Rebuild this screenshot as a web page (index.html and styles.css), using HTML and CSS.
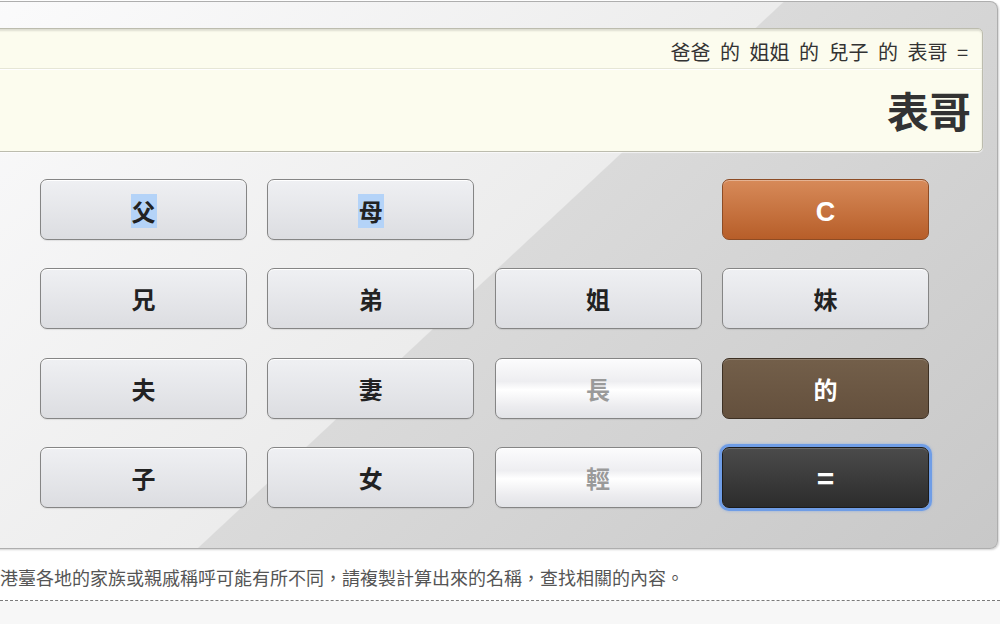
FILE: index.html
```html
<!DOCTYPE html>
<html lang="zh-Hant">
<head>
<meta charset="utf-8">
<title>親戚稱呼計算器</title>
<link rel="stylesheet" href="styles.css">
</head>
<body>
<div class="page">
  <div class="calc">
    <div class="display">
      <div class="expr">爸爸 的 姐姐 的 兒子 的 表哥 =</div>
      <div class="result">表哥</div>
    </div>
    <div class="keys">
      <button class="key"><span class="sel">父</span></button>
      <button class="key"><span class="sel">母</span></button>
      <span class="blank"></span>
      <button class="key key-clear">C</button>

      <button class="key">兄</button>
      <button class="key">弟</button>
      <button class="key">姐</button>
      <button class="key">妹</button>

      <button class="key">夫</button>
      <button class="key">妻</button>
      <button class="key key-off">長</button>
      <button class="key key-of">的</button>

      <button class="key">子</button>
      <button class="key">女</button>
      <button class="key key-off">輕</button>
      <button class="key key-eq">=</button>
    </div>
  </div>
  <p class="note">港臺各地的家族或親戚稱呼可能有所不同，請複製計算出來的名稱，查找相關的內容。</p>
  <div class="below"></div>
</div>
</body>
</html>
```
FILE: styles.css
```css
html, body {
  margin: 0;
  padding: 0;
  background: #ffffff;
}

body {
  font-family: "Noto Sans CJK TC", "Noto Sans", sans-serif;
  color: #333;
}

.page {
  padding-top: 1px;
}

.calc {
  margin-left: -30px;
  width: 1028px;
  box-sizing: border-box;
  padding: 26px 69px 40px 70px;
  border: 1px solid #aeaeae;
  border-left: none;
  border-radius: 0 8px 8px 0;
  background: linear-gradient(137deg, #fbfbfc 0%, #ececec 50.4%, #dadada 50.5%, #c8c8c8 100%);
  box-shadow: 1px 1px 2px rgba(0, 0, 0, 0.18);
}

.display {
  margin: 0 -55px 0 -56px;
  background: #fcfcee;
  border: 1px solid #bcbcae;
  border-radius: 5px;
  box-shadow: inset 0 2px 2px rgba(0, 0, 0, 0.12), 0 1px 1px rgba(255, 255, 255, 0.7);
  text-align: right;
}

.expr {
  height: 40px;
  box-sizing: border-box;
  padding: 10px 14px 0 0;
  font-size: 20px;
  line-height: 26px;
  word-spacing: 5px;
  color: #333;
  border-bottom: 1px solid #e6e6d6;
  box-shadow: 0 1px 0 #ffffff;
}

.result {
  height: 82px;
  box-sizing: border-box;
  padding: 15px 11px 0 0;
  font-size: 42px;
  line-height: 52px;
  font-weight: 700;
  color: #333;
}

.keys {
  margin-top: 27px;
  display: grid;
  grid-template-columns: repeat(4, 207px);
  grid-auto-rows: 61px;
  column-gap: 20.3px;
  row-gap: 28.3px;
}

.key {
  display: flex;
  align-items: center;
  justify-content: center;
  margin: 0;
  padding: 0;
  border: 1px solid #858585;
  border-radius: 7px;
  background: linear-gradient(#eff0f3, #dcdde1);
  box-shadow: inset 0 1px 0 #ffffff, 0 1px 1px rgba(0, 0, 0, 0.08);
  font-family: "Noto Sans CJK TC", "Noto Sans", sans-serif;
  font-size: 24px;
  font-weight: 700;
  color: #222;
  cursor: pointer;
}

.sel {
  background: #b4d3f8;
  line-height: 34px;
  padding: 0 1px;
  margin-top: 3px;
}

.key-off {
  background: linear-gradient(#fcfcfd 0%, #eeeef1 38%, #ffffff 52%, #ececef 80%, #e2e3e7 100%);
  color: #9a9a9a;
}

.key-clear {
  background: linear-gradient(#d78a59, #b75e29);
  border-color: #8d4c25;
  box-shadow: inset 0 1px 0 rgba(255, 255, 255, 0.35);
  color: #ffffff;
  font-family: "Liberation Sans", Arial, sans-serif;
  font-size: 27px;
  padding-top: 6px;
}

.key-of {
  background: linear-gradient(#735f4a, #64503d);
  border-color: #3d3023;
  box-shadow: inset 0 1px 0 rgba(255, 255, 255, 0.2);
  color: #ffffff;
}

.key-eq {
  background: linear-gradient(#4b4b4b, #2c2c2c);
  border-color: #1b1b1b;
  box-shadow: inset 0 1px 0 rgba(255, 255, 255, 0.18), 0 0 0 3px #6f9de6, 0 0 3px 3px rgba(111, 157, 230, 0.6);
  color: #ffffff;
  font-family: "Liberation Sans", Arial, sans-serif;
  font-size: 30px;
  padding-top: 3px;
}

.note {
  margin: 0;
  height: 52px;
  box-sizing: border-box;
  padding: 16px 0 0 0;
  font-size: 18px;
  line-height: 24px;
  color: #555;
  white-space: nowrap;
  border-bottom: 1px dashed #7a7a7a;
}

.below {
  background: #f7f7f7;
  height: 23px;
}
```
